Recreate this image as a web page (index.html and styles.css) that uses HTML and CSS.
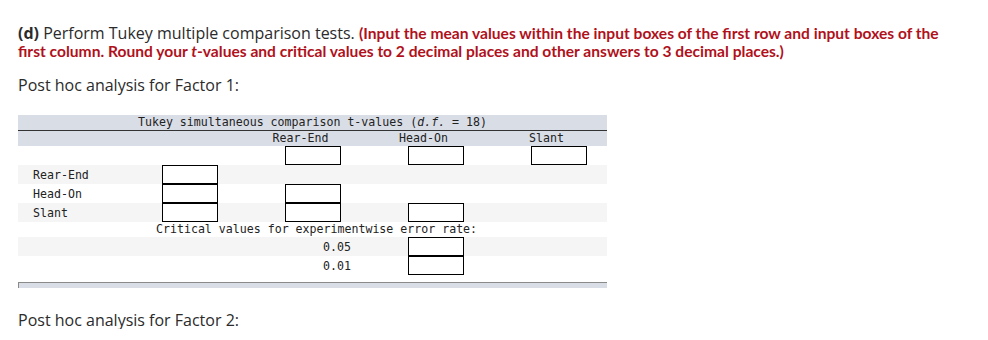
FILE: index.html
```html
<!DOCTYPE html>
<html>
<head>
<meta charset="utf-8">
<link rel="stylesheet" href="styles.css">
</head>
<body>
<div class="page">
  <p class="question"><b>(d)</b> Perform Tukey multiple comparison tests. <span class="hint">(Input the mean values within the input boxes of the first row and input boxes of the first column. Round your <i>t</i>-values and critical values to 2 decimal places and other answers to 3 decimal places.)</span></p>
  <p class="sub">Post hoc analysis for Factor 1:</p>

  <div class="tukey">
    <div class="title">Tukey simultaneous comparison t-values (<i>d.f.</i> = 18)</div>
    <div class="heads">
      <span></span><span>Rear-End</span><span>Head-On</span><span>Slant</span>
    </div>
    <div class="row">
      <span class="lab"></span>
      <span class="cell"></span>
      <span class="cell"><span class="box"></span></span>
      <span class="cell"><span class="box"></span></span>
      <span class="cell"><span class="box"></span></span>
    </div>
    <div class="row alt">
      <span class="lab">Rear-End</span>
      <span class="cell"><span class="box"></span></span>
      <span class="cell"></span>
      <span class="cell"></span>
      <span class="cell"></span>
    </div>
    <div class="row">
      <span class="lab">Head-On</span>
      <span class="cell"><span class="box"></span></span>
      <span class="cell"><span class="box"></span></span>
      <span class="cell"></span>
      <span class="cell"></span>
    </div>
    <div class="row alt">
      <span class="lab">Slant</span>
      <span class="cell"><span class="box"></span></span>
      <span class="cell"><span class="box"></span></span>
      <span class="cell"><span class="box"></span></span>
      <span class="cell"></span>
    </div>
    <div class="crit">Critical values for experimentwise error rate:</div>
    <div class="crow alt">
      <span class="clab">0.05</span>
      <span class="box"></span>
    </div>
    <div class="crow">
      <span class="clab">0.01</span>
      <span class="box"></span>
    </div>
    <div class="foot"></div>
  </div>

  <p class="sub sub2">Post hoc analysis for Factor 2:</p>
</div>
</body>
</html>
```

FILE: styles.css
```css
html, body {
  margin: 0;
  padding: 0;
  background: #fff;
}
.page {
  padding: 24px 18px 0 18px;
  font-family: "Open Sans", "Liberation Sans", sans-serif;
  color: #2b2b2b;
  font-size: 16px;
}
.question {
  margin: 0;
  width: 932px;
  line-height: 18px;
}
.question b {
  font-weight: 700;
}
.hint {
  color: #b0111b;
  font-family: Lato, "Open Sans", sans-serif;
  font-weight: 700;
  font-size: 15.6px;
}
.sub {
  margin: 16px 0 0 0;
  line-height: 18px;
}
.tukey {
  width: 589px;
  margin-top: 21px;
  font-family: "DejaVu Sans Mono", monospace;
  font-size: 11.6px;
  color: #222;
}
.title {
  background: #d9dde6;
  height: 15px;
  line-height: 15px;
  text-align: center;
  border-bottom: 1px solid #333;
}
.heads {
  display: grid;
  grid-template-columns: 221px 123px 123px 123px;
  background: #d9dde6;
  height: 15px;
  line-height: 15px;
}
.heads span {
  text-align: center;
}
.row {
  display: grid;
  grid-template-columns: 144px 123px 123px 123px 76px;
  height: 19px;
  align-items: center;
}
.alt {
  background: #f5f5f5;
}
.lab {
  padding-left: 15px;
}
.cell {
  display: flex;
  height: 19px;
}
.box {
  display: block;
  box-sizing: border-box;
  width: 56px;
  height: 19px;
  border: 1px solid #000;
  background: #fff;
}
.crit {
  height: 15px;
  line-height: 15px;
  padding-left: 138px;
}
.crow {
  display: flex;
  height: 19px;
  align-items: center;
}
.clab {
  width: 390px;
  padding-left: 305px;
  box-sizing: border-box;
}
.foot {
  margin-top: 7px;
  height: 5px;
  background: #d9dde6;
  border-top: 1px solid #8a8a8a;
  border-left: 1px solid #8a8a8a;
}
.sub2 {
  margin-top: 23px;
}
```
